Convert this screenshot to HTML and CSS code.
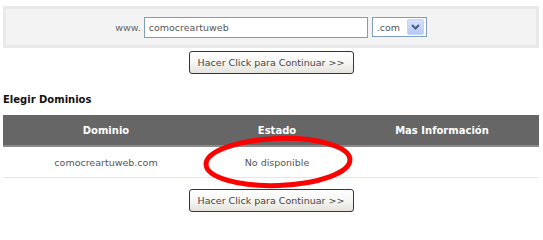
FILE: index.html
```html
<!DOCTYPE html>
<html lang="es">
<head>
<meta charset="utf-8">
<title>Elegir Dominios</title>
<link rel="stylesheet" href="styles.css">
</head>
<body>
<div class="page">
  <div class="search-box">
    <span class="prefix">www.</span>
    <div class="text-input">comocreartuweb</div>
    <div class="select">
      <span class="select-value">.com</span>
      <span class="select-arrow">
        <svg width="9" height="6" viewBox="0 0 9 6"><path d="M1 1 L4.5 4.5 L8 1" fill="none" stroke="#4a5d80" stroke-width="2"/></svg>
      </span>
    </div>
  </div>
  <div class="btn-row"><button class="btn">Hacer Click para Continuar &gt;&gt;</button></div>

  <h3 class="section-title">Elegir Dominios</h3>

  <div class="table-wrap">
    <table class="domains">
      <thead>
        <tr><th class="c1">Dominio</th><th class="c2">Estado</th><th class="c3">Mas Información</th></tr>
      </thead>
      <tbody>
        <tr><td>comocreartuweb.com</td><td>No disponible</td><td></td></tr>
      </tbody>
    </table>
    <svg class="mark" width="152" height="56" viewBox="0 0 152 56"><ellipse cx="76" cy="28" rx="72" ry="23.5" transform="rotate(-2 76 28)" fill="none" stroke="#f00" stroke-width="5"/></svg>
  </div>
  <div class="btn-row second"><button class="btn">Hacer Click para Continuar &gt;&gt;</button></div>
</div>
</body>
</html>
```

FILE: styles.css
```css
html, body {
  margin: 0;
  padding: 0;
  background: #fff;
}
body {
  font-family: "DejaVu Sans", Verdana, sans-serif;
  font-size: 9.5px;
  color: #555;
}
.page {
  width: 536px;
  margin-left: 3px;
  padding-top: 6px;
}
.search-box {
  height: 36px;
  border: 3px solid #e9e9e9;
  background: #f3f3f3;
  display: flex;
  align-items: center;
  justify-content: center;
}
.prefix {
  color: #666;
  margin-right: 3px;
}
.text-input {
  box-sizing: border-box;
  width: 224px;
  height: 21px;
  border: 1px solid #7f9db9;
  background: #fff;
  color: #555;
  padding-left: 4px;
  display: flex;
  align-items: center;
  margin-right: 4px;
}
.select {
  box-sizing: border-box;
  width: 55px;
  height: 20px;
  border: 1px solid #7f9db9;
  background: #fff;
  display: flex;
  align-items: center;
  justify-content: space-between;
  padding: 0 2px 0 4px;
}
.select-value {
  color: #555;
}
.select-arrow {
  box-sizing: border-box;
  width: 17px;
  height: 16px;
  border-radius: 2px;
  background: linear-gradient(#d6e2fd, #b5c9f8);
  border: 1px solid #c3d3fb;
  display: flex;
  align-items: center;
  justify-content: center;
}
.btn-row {
  display: flex;
  justify-content: center;
  margin-top: 3px;
}
.btn-row.second {
  margin-top: 11px;
}
.btn {
  box-sizing: border-box;
  width: 165px;
  height: 23px;
  padding: 0;
  border: 1px solid #1d3a5f;
  border-radius: 3px;
  background: linear-gradient(#ffffff 0%, #f6f6f3 50%, #e4e3dc 100%);
  font-family: "DejaVu Sans", Verdana, sans-serif;
  font-size: 9.5px;
  color: #444;
}
.section-title {
  margin: 19px 0 0 0;
  font-size: 10px;
  font-weight: bold;
  color: #111;
  line-height: 14px;
}
.table-wrap {
  position: relative;
  margin-top: 8px;
}
.domains {
  width: 536px;
  border-collapse: collapse;
  table-layout: fixed;
}
.domains th {
  height: 30px;
  padding: 0;
  background: #666;
  color: #fff;
  font-size: 10px;
  font-weight: bold;
  border-bottom: 2px solid #8a8a8a;
  text-align: center;
}
.domains th.c1 { width: 206px; }
.domains th.c2 { width: 136px; }
.domains td {
  height: 30px;
  padding: 0;
  text-align: center;
  color: #555;
  border-bottom: 1px solid #e6e6e6;
}
.mark {
  position: absolute;
  left: 199px;
  top: 19px;
}
```
